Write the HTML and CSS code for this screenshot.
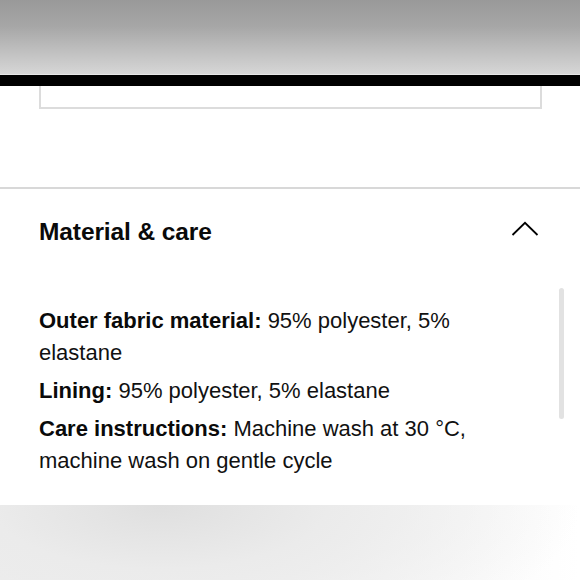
FILE: index.html
```html
<!DOCTYPE html>
<html lang="en">
<head>
<meta charset="utf-8">
<link rel="stylesheet" href="styles.css">
</head>
<body>
<div class="page">
  <div class="top-shade"></div>
  <div class="black-bar"></div>
  <div class="box-wrap"><div class="box"></div></div>
  <section class="accordion">
    <div class="acc-head">
      <h2 class="acc-title">Material &amp; care</h2>
      <svg class="chevron" width="28" height="16" viewBox="0 0 28 16" aria-hidden="true"><path d="M1.5 14 L14 1.8 L26.5 14" fill="none" stroke="#000" stroke-width="1.8"/></svg>
    </div>
    <div class="acc-body">
      <p class="attr"><b>Outer fabric material:</b> 95% polyester, 5% elastane</p>
      <p class="attr"><b>Lining:</b> 95% polyester, 5% elastane</p>
      <p class="attr"><b>Care instructions:</b> Machine wash at 30 °C, machine wash on gentle cycle</p>
      <div class="scrollbar"></div>
    </div>
  </section>
  <div class="bottom-shade"></div>
</div>
</body>
</html>
```
FILE: styles.css
```css
html, body {
  margin: 0;
  padding: 0;
  background: #fff;
}
.page {
  width: 580px;
  height: 580px;
  overflow: hidden;
  display: flex;
  flex-direction: column;
  font-family: "Liberation Sans", Arial, sans-serif;
  color: #111;
}
.top-shade {
  height: 74px;
  flex: none;
  background: linear-gradient(to bottom, #999999 0%, #a6a6a6 35%, #c4c4c4 75%, #d6d6d6 100%);
  border-bottom: 1px solid #e6e6e6;
}
.black-bar {
  height: 11px;
  flex: none;
  background: #000;
}
.box-wrap {
  flex: none;
  padding: 0 38px 0 39px;
}
.box {
  height: 21px;
  border: 2px solid #dcdcdc;
  border-top: none;
}
.accordion {
  flex: none;
  margin-top: 78px;
  border-top: 2px solid #d8d8d8;
}
.acc-head {
  display: flex;
  align-items: center;
  justify-content: space-between;
  padding: 27px 41px 0 39px;
  height: 32px;
}
.acc-title {
  margin: 0;
  font-size: 24.5px;
  font-weight: 700;
  color: #0a0a0a;
  letter-spacing: -0.1px;
}
.chevron {
  display: block;
  margin-top: -6px;
}
.acc-body {
  position: relative;
  padding: 57px 80px 0 39px;
  height: 200px;
}
.attr {
  margin: 0 0 6px;
  font-size: 22px;
  line-height: 32px;
  color: #111;
}
.attr b {
  font-weight: 700;
  color: #0a0a0a;
}
.scrollbar {
  position: absolute;
  left: 559px;
  top: 40px;
  width: 5px;
  height: 131px;
  border-radius: 3px;
  background: #e2e2e2;
}
.bottom-shade {
  flex: 1;
  background:
    radial-gradient(ellipse 420px 160px at 160px 0px, #dfdfdf 0%, #ebebeb 40%, rgba(250,250,250,0) 100%),
    linear-gradient(to right, #eeeeee 0%, #f3f3f3 50%, #ffffff 100%);
}
```
